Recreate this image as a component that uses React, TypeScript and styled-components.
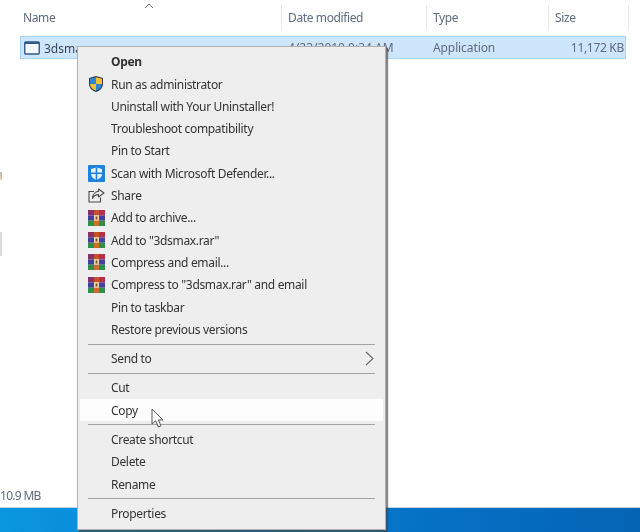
import React from "react";
import styled, { createGlobalStyle } from "styled-components";

const Global = createGlobalStyle`
  html, body { margin: 0; padding: 0; background: #fff; }
  body { font-family: "Noto Sans", "Open Sans", sans-serif; font-size: 12px; }
`;

const Page = styled.div`
  position: relative;
  width: 640px;
  height: 532px;
  overflow: hidden;
  display: flex;
  flex-direction: column;
  background: #fff;
  filter: blur(0.6px);
`;

const Explorer = styled.div`
  flex: 1;
  display: flex;
  min-height: 0;
`;

const Rail = styled.div`
  width: 2px;
  flex: none;
  display: flex;
  flex-direction: column;
  padding-top: 172px;
`;

const RailMark = styled.div`
  width: 2px;
  height: 8px;
  margin-bottom: 52px;
  background: linear-gradient(#8a8a8a, #d8b070);
  opacity: 0.6;
`;

const RailThumb = styled.div`
  width: 2px;
  height: 24px;
  background: #dcdcdc;
`;

const Files = styled.div`
  flex: 1;
  display: flex;
  flex-direction: column;
  padding-left: 18px;
  min-width: 0;
`;

const HeaderRow = styled.div`
  position: relative;
  height: 36px;
  display: grid;
  grid-template-columns: 262px 145px 122px 80px;
  align-items: start;
  padding-top: 5px;
  box-sizing: border-box;
`;

const HeaderCell = styled.div`
  height: 25px;
  line-height: 26px;
  padding-left: 6px;
  color: #5d6b80;
  font-size: 12px;
  letter-spacing: -0.38px;
  border-right: 1px solid #e6e8ec;
  box-sizing: border-box;
  &:first-child { padding-left: 3px; }
`;

const SortCaret = styled.svg`
  position: absolute;
  left: 124px;
  top: 3px;
  width: 10px;
  height: 6px;
`;

const FileRow = styled.div`
  width: 606px;
  height: 23px;
  box-sizing: border-box;
  display: grid;
  grid-template-columns: 261px 146px 120px 1fr;
  align-items: center;
  background: #cde6fc;
  border: 1px solid #a9d5f9;
  color: #5f6b7c;
  font-size: 12px;
`;

const NameCell = styled.div`
  display: flex;
  align-items: center;
  gap: 4px;
  padding-left: 3px;
  padding-top: 1px;
  color: #3d4654;
`;

const DateCell = styled.div`
  padding-left: 6px;
  white-space: nowrap;
`;

const TypeCell = styled.div`
  padding-left: 5px;
  letter-spacing: -0.1px;
`;

const SizeCell = styled.div`
  text-align: right;
  padding-right: 1px;
  letter-spacing: -0.3px;
`;

const StatusBar = styled.div`
  height: 29px;
  flex: none;
  line-height: 36px;
  color: #5f6b7c;
  font-size: 12px;
  letter-spacing: -0.7px;
  white-space: nowrap;
`;

const Taskbar = styled.div`
  height: 25px;
  flex: none;
  border-top: 1px solid #c4d4e6;
  box-sizing: border-box;
  background: linear-gradient(90deg, #0a96e0 0%, #0881d2 35%, #0570c4 70%, #0564b4 100%);
`;

const Menu = styled.div`
  position: absolute;
  left: 77px;
  top: 46px;
  width: 309px;
  height: 484px;
  box-sizing: border-box;
  padding: 3.6px 2px 4px;
  background: #eeeeee;
  border: 1px solid #b0b0b0;
  box-shadow: 2px 2px 1px rgba(70, 70, 70, 0.65);
  display: flex;
  flex-direction: column;
  color: #333;
  z-index: 2;
`;

const Item = styled.div<{ $active?: boolean; $strong?: boolean }>`
  height: 22.3px;
  flex: none;
  display: flex;
  align-items: center;
  position: relative;
  background: ${(p) => (p.$active ? "#fdfdfd" : "transparent")};
  font-weight: ${(p) => (p.$strong ? 700 : 400)};
  white-space: nowrap;
`;

const IconSlot = styled.div`
  width: 31px;
  flex: none;
  display: flex;
  justify-content: center;
  padding-left: 1px;
  box-sizing: border-box;
`;

const Label = styled.span`
  flex: 1;
  font-size: 12px;
  letter-spacing: -0.33px;
`;

const Chevron = styled.svg`
  width: 9px;
  height: 15px;
  margin-right: 9px;
`;

const Separator = styled.div`
  height: 1px;
  flex: none;
  margin: 3.05px 8px 3px 8px;
  background: #a3a3a3;
`;

const PointerArrow = styled.svg`
  position: absolute;
  left: 71px;
  top: 9px;
  width: 16px;
  height: 22px;
`;

const AppIcon = () => (
  <svg width="16" height="14" viewBox="0 0 16 14">
    <rect x="0.75" y="1" width="14.5" height="12" rx="1" fill="#f4f8fc" stroke="#33588a" strokeWidth="1.4" />
    <rect x="1" y="1" width="14" height="2" fill="#33588a" />
  </svg>
);

const Shield = () => (
  <svg width="16" height="18" viewBox="0 0 16 18">
    <path d="M8 1 L15 3 V9 C15 13 11.5 16 8 17 C4.5 16 1 13 1 9 V3 Z" fill="#2c3e58" />
    <path d="M8 2.2 V9 H2 V3.8 Z" fill="#2f86d6" />
    <path d="M8 2.2 L14 3.8 V9 H8 Z" fill="#f4c02c" />
    <path d="M2 9 H8 V15.8 C5 14.8 2.2 12.4 2 9 Z" fill="#f4c02c" />
    <path d="M8 9 H14 C13.8 12.4 11 14.8 8 15.8 Z" fill="#2f86d6" />
  </svg>
);

const Defender = () => (
  <svg width="17" height="17" viewBox="0 0 17 17">
    <rect width="17" height="17" rx="1" fill="#1c82dc" />
    <path d="M8.5 2.5 L14 4 V9 C14 12 11.5 14 8.5 15 C5.5 14 3 12 3 9 V4 Z" fill="#e6f2fc" />
    <path d="M7.7 2.5 H9.3 V15 H7.7 Z M3 7.5 H14 V9 H3 Z" fill="#1c82dc" />
  </svg>
);

const Share = () => (
  <svg width="17" height="15" viewBox="0 0 17 15" fill="none" stroke="#4a4a4a" strokeWidth="1.1">
    <path d="M6 3.5 H1 V14 H12.5 V9.5" />
    <path d="M10.5 1 L16 5 L10.5 9 V6.6 C7.5 6.6 5.5 8 4.5 10.5 C4.5 6.5 7 3.6 10.5 3.4 Z" strokeLinejoin="round" />
  </svg>
);

const Rar = () => (
  <svg width="17" height="16" viewBox="0 0 17 16">
    <rect x="0" y="0" width="6" height="5.4" fill="#8a2f66" />
    <rect x="6" y="0" width="5" height="5.4" fill="#c8502c" />
    <rect x="11" y="0" width="6" height="5.4" fill="#b8304a" />
    <rect x="0" y="5.4" width="6" height="5.3" fill="#3f3f9c" />
    <rect x="6" y="5.4" width="5" height="5.3" fill="#e6d6b8" />
    <rect x="11" y="5.4" width="6" height="5.3" fill="#4a3fa0" />
    <rect x="0" y="10.7" width="6" height="5.3" fill="#2f8f46" />
    <rect x="6" y="10.7" width="5" height="5.3" fill="#c8702c" />
    <rect x="11" y="10.7" width="6" height="5.3" fill="#2f8f46" />
    <rect x="7.6" y="6.5" width="1.8" height="3" fill="#8a4a2a" />
  </svg>
);

type Row =
  | { kind: "sep" }
  | { kind: "item"; label: string; icon?: React.ReactNode; strong?: boolean; arrow?: boolean; active?: boolean };

const item = (label: string, extra: Partial<Extract<Row, { kind: "item" }>> = {}): Row => ({ kind: "item", label, ...extra });
const sep: Row = { kind: "sep" };

const rows: Row[] = [
  item("Open", { strong: true }),
  item("Run as administrator", { icon: <Shield /> }),
  item("Uninstall with Your Uninstaller!"),
  item("Troubleshoot compatibility"),
  item("Pin to Start"),
  item("Scan with Microsoft Defender...", { icon: <Defender /> }),
  item("Share", { icon: <Share /> }),
  item("Add to archive...", { icon: <Rar /> }),
  item('Add to "3dsmax.rar"', { icon: <Rar /> }),
  item("Compress and email...", { icon: <Rar /> }),
  item('Compress to "3dsmax.rar" and email', { icon: <Rar /> }),
  item("Pin to taskbar"),
  item("Restore previous versions"),
  sep,
  item("Send to", { arrow: true }),
  sep,
  item("Cut"),
  item("Copy", { active: true }),
  sep,
  item("Create shortcut"),
  item("Delete"),
  item("Rename"),
  sep,
  item("Properties"),
];

export default function App() {
  return (
    <>
      <Global />
      <Page>
        <Explorer>
          <Rail>
            <RailMark />
            <RailThumb />
          </Rail>
          <Files>
            <HeaderRow>
              <HeaderCell>Name</HeaderCell>
              <HeaderCell>Date modified</HeaderCell>
              <HeaderCell>Type</HeaderCell>
              <HeaderCell>Size</HeaderCell>
              <SortCaret viewBox="0 0 10 6" fill="none" stroke="#666" strokeWidth="1">
                <path d="M1 5 L5 1 L9 5" />
              </SortCaret>
            </HeaderRow>
            <FileRow>
              <NameCell>
                <AppIcon />
                3dsmax
              </NameCell>
              <DateCell>4/23/2019 9:34 AM</DateCell>
              <TypeCell>Application</TypeCell>
              <SizeCell>11,172 KB</SizeCell>
            </FileRow>
          </Files>
        </Explorer>
        <StatusBar>10.9 MB</StatusBar>
        <Taskbar />
        <Menu>
          {rows.map((r, i) =>
            r.kind === "sep" ? (
              <Separator key={i} />
            ) : (
              <Item key={i} $active={r.active} $strong={r.strong}>
                <IconSlot>{r.icon}</IconSlot>
                <Label>{r.label}</Label>
                {r.arrow && (
                  <Chevron viewBox="0 0 9 15" fill="none" stroke="#666" strokeWidth="1.1">
                    <path d="M1 1 L8 7.5 L1 14" />
                  </Chevron>
                )}
                {r.active && (
                  <PointerArrow viewBox="0 0 16 22">
                    <path
                      d="M1 1 V16 L4.6 12.8 L7.4 19 L10 17.8 L7.4 12 H12 Z"
                      fill="#fff"
                      stroke="#555"
                      strokeWidth="1"
                      strokeLinejoin="round"
                    />
                  </PointerArrow>
                )}
              </Item>
            )
          )}
        </Menu>
      </Page>
    </>
  );
}
